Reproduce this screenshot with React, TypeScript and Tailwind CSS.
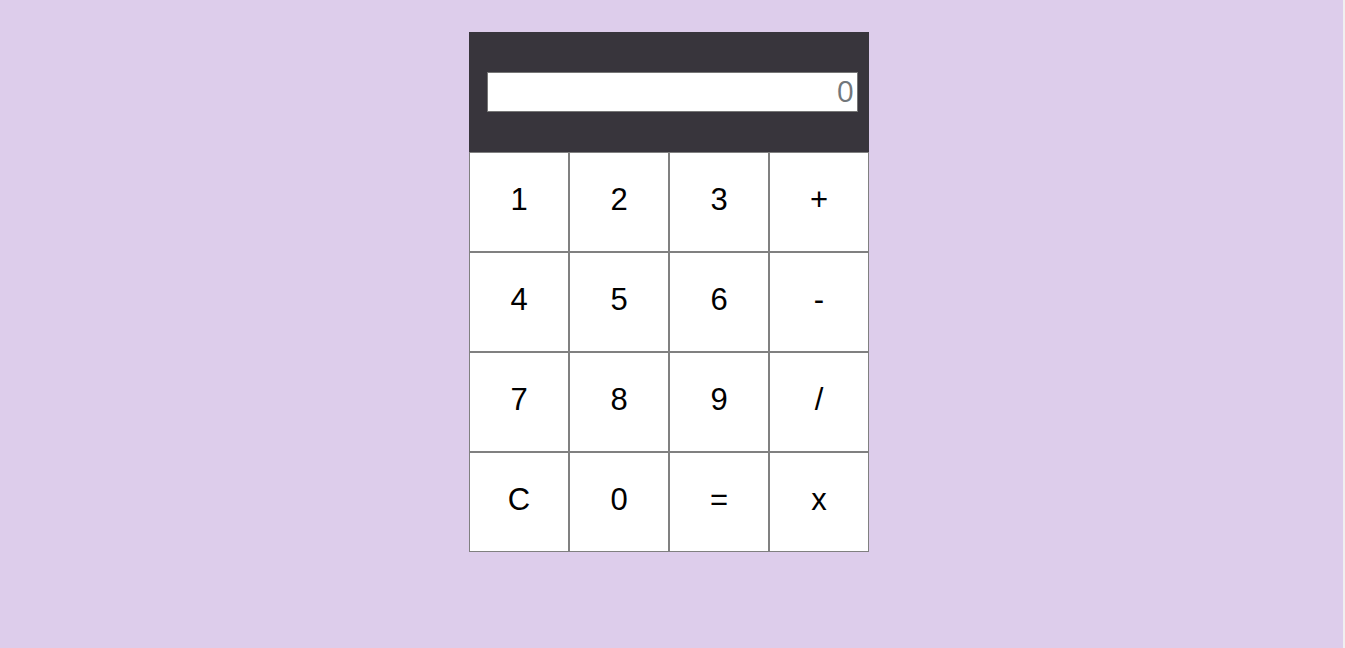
const keys = ["1", "2", "3", "+", "4", "5", "6", "-", "7", "8", "9", "/", "C", "0", "=", "x"];

export default function App() {
  return (
    <div className="flex h-[648px] w-full bg-[#f0f0f0]">
      <div className="flex flex-1 justify-center bg-[#ddcdeb] pt-[32px]">
        <div className="mr-[5px] w-[400px] self-start">
          {/* display */}
          <div className="flex h-[120px] items-center bg-[#38353c] pl-[18px]">
            <input
              readOnly
              placeholder="0"
              className="h-[40px] w-[371px] border border-[#767676] bg-white px-[3px] pb-[3px] text-right text-[30px] text-[#666] outline-none placeholder:text-[#72777b]"
              style={{ fontFamily: '"Open Sans", "Noto Sans", sans-serif' }}
            />
          </div>

          {/* keypad */}
          <div className="grid grid-cols-4">
            {keys.map((k) => (
              <button
                key={k}
                className="flex h-[100px] items-center justify-center border border-[#808080] bg-white pb-[3px] text-[31px] text-black"
                style={{ fontFamily: '"Liberation Sans", Arial, sans-serif' }}
              >
                {k}
              </button>
            ))}
          </div>
        </div>
      </div>
      <div className="w-[2px]" />
    </div>
  );
}
